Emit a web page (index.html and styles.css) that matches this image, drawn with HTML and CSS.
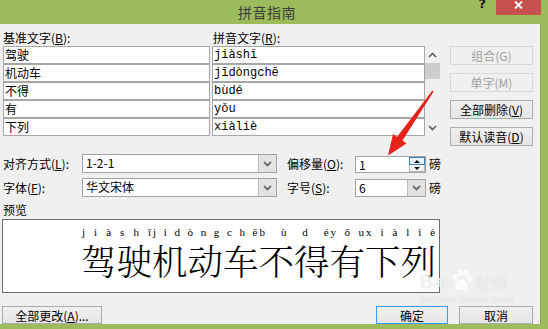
FILE: index.html
```html
<!DOCTYPE html>
<html lang="zh-CN">
<head>
<meta charset="utf-8">
<title>拼音指南</title>
<link rel="stylesheet" href="styles.css">
</head>
<body>
<div class="window">
  <div class="titlebar">
    <div class="title">拼音指南</div>
    <div class="controls">
      <span class="help">?</span>
      <span class="close"><svg width="9" height="8" viewBox="0 0 9 8"><path d="M1 0.5 L8 7.5 M8 0.5 L1 7.5" stroke="#fff" stroke-width="1.8" fill="none"/></svg></span>
    </div>
  </div>
  <div class="panel">
    <div class="top">
      <div class="table">
        <div class="hdr"><span class="h1">基准文字(<u>B</u>):</span><span class="h2">拼音文字(<u>R</u>):</span></div>
        <div class="row"><div class="cell base">驾驶</div><div class="cell py">jiàshǐ</div></div>
        <div class="row"><div class="cell base">机动车</div><div class="cell py">jīdòngchē</div></div>
        <div class="row"><div class="cell base">不得</div><div class="cell py">bùdé</div></div>
        <div class="row"><div class="cell base">有</div><div class="cell py">yǒu</div></div>
        <div class="row"><div class="cell base">下列</div><div class="cell py">xiàliè</div></div>
      </div>
      <div class="scrollbar">
        <div class="sb-btn"><svg width="9" height="6" viewBox="0 0 9 6"><path d="M1 5 L4.5 1.5 L8 5" stroke="#606060" stroke-width="1.7" fill="none"/></svg></div>
        <div class="sb-thumb"></div>
        <div class="sb-track"></div>
        <div class="sb-btn"><svg width="9" height="6" viewBox="0 0 9 6"><path d="M1 1 L4.5 4.5 L8 1" stroke="#606060" stroke-width="1.7" fill="none"/></svg></div>
      </div>
      <div class="side">
        <div class="btn disabled">组合(G)</div>
        <div class="btn disabled">单字(M)</div>
        <div class="btn">全部删除(<u>V</u>)</div>
        <div class="btn">默认读音(<u>D</u>)</div>
      </div>
    </div>

    <div class="opts">
      <div class="opt">
        <span class="lbl">对齐方式(<u>L</u>):</span>
        <div class="select wide"><span class="val">1-2-1</span><span class="drop"><svg width="9" height="6" viewBox="0 0 9 6"><path d="M1 1 L4.5 4.5 L8 1" stroke="#6a6a6a" stroke-width="1.8" fill="none"/></svg></span></div>
        <span class="lbl2">偏移量(<u>O</u>):</span>
        <div class="spin"><span class="val">1</span>
          <span class="arrows"><span class="up"><i class="tri-up"></i></span><span class="down"><i class="tri-down"></i></span></span>
        </div>
        <span class="unit">磅</span>
      </div>
      <div class="opt">
        <span class="lbl">字体(<u>F</u>):</span>
        <div class="select wide"><span class="val">华文宋体</span><span class="drop"><svg width="9" height="6" viewBox="0 0 9 6"><path d="M1 1 L4.5 4.5 L8 1" stroke="#6a6a6a" stroke-width="1.8" fill="none"/></svg></span></div>
        <span class="lbl2">字号(<u>S</u>):</span>
        <div class="select narrow"><span class="val">6</span><span class="drop"><svg width="9" height="6" viewBox="0 0 9 6"><path d="M1 1 L4.5 4.5 L8 1" stroke="#6a6a6a" stroke-width="1.8" fill="none"/></svg></span></div>
        <span class="unit">磅</span>
      </div>
    </div>

    <div class="pv-label">预览</div>
    <div class="preview">
      <div class="ruby"><div class="rt"><span>j</span><span>i</span><span>à</span><span>s</span><span>h</span><span>ǐ</span></div><div class="rb">驾驶</div></div>
      <div class="ruby"><div class="rt"><span>j</span><span>i</span><span>d</span><span>ò</span><span>n</span><span>g</span><span>c</span><span>h</span><span>ē</span></div><div class="rb">机动车</div></div>
      <div class="ruby"><div class="rt"><span>b</span><span>ù</span><span>d</span><span>é</span></div><div class="rb">不得</div></div>
      <div class="ruby"><div class="rt"><span>y</span><span>ǒ</span><span>u</span></div><div class="rb">有</div></div>
      <div class="ruby"><div class="rt"><span>x</span><span>i</span><span>à</span><span>l</span><span>i</span><span>è</span></div><div class="rb">下列</div></div>
    </div>

    <div class="footer">
      <div class="btn b-all">全部更改(<u>A</u>)...</div>
      <div class="spacer"></div>
      <div class="btn b-ok">确定</div>
      <div class="btn b-cancel">取消</div>
    </div>
  </div>

  <div class="watermark">
    <div class="wm-top"><span class="wm-bai">Bai</span><svg class="wm-paw" width="24" height="24" viewBox="0 0 24 24"><ellipse cx="6" cy="9" rx="2.6" ry="3.4"/><ellipse cx="11" cy="4.5" rx="2.6" ry="3.4"/><ellipse cx="16.5" cy="5" rx="2.6" ry="3.4"/><ellipse cx="20.5" cy="10.5" rx="2.4" ry="3"/><path d="M12.5 11 C9 11 6 16 6 19 C6 22 9 22 12.5 21 C16 22 19 22 19 19 C19 16 16 11 12.5 11 Z"/></svg><span class="wm-jy">经验</span></div>
    <div class="wm-url">jingyan.baidu.com</div>
  </div>

  <svg class="arrow" width="548" height="329" viewBox="0 0 548 329"><polygon points="432.4,90.6 433.6,91.4 402.5,140.6 406.5,143.5 388,155.5 393,134 397,137" fill="#e8211b"/></svg>
</div>
</body>
</html>
```

FILE: styles.css
```css
html, body {
  margin: 0;
  padding: 0;
}
body {
  width: 548px;
  height: 329px;
  overflow: hidden;
  font-family: "Noto Sans CJK SC", "Noto Sans", sans-serif;
  font-size: 12px;
  color: #000;
}
u { text-decoration: underline; text-underline-offset: 1px; }

.window {
  position: relative;
  width: 548px;
  height: 329px;
  background: #9cbb5a;
  display: flex;
  flex-direction: column;
}

/* title bar */
.titlebar {
  height: 24px;
  display: grid;
  flex: none;
}
.titlebar > * { grid-area: 1 / 1; }
.title {
  justify-self: center;
  align-self: center;
  padding-right: 14px;
  font-size: 14px;
  letter-spacing: 0.5px;
  line-height: 24px;
  color: #3b3b3b;
}
.controls {
  justify-self: end;
  align-self: start;
  display: flex;
  align-items: flex-start;
  margin-right: 7px;
}
.help {
  font: bold 13px/13px "DejaVu Sans", sans-serif;
  color: #202020;
  margin-top: -3px;
  margin-right: 10px;
}
.close {
  width: 45px;
  height: 20px;
  margin-top: -5px;
  background: #c75050;
  display: flex;
  align-items: center;
  justify-content: center;
}

/* panel */
.panel {
  flex: 1;
  margin: 0 8px 8px 0;
  background: #f0f0f0;
  box-shadow: 1px 0 0 #8caa4d;
  display: flex;
  flex-direction: column;
}

.top {
  display: flex;
  align-items: flex-start;
  padding-left: 3px;
}
.table { width: 422px; }
.hdr {
  height: 22px;
  display: flex;
  align-items: flex-end;
}
.hdr span { line-height: 15px; padding-bottom: 1px; }
.hdr .h1 { width: 210px; }
.row { display: flex; height: 18px; }
.cell {
  box-sizing: border-box;
  height: 18px;
  border: 1px solid #a6a6a6;
  background: #fff;
  line-height: 16px;
  padding-left: 1px;
  white-space: nowrap;
  overflow: hidden;
}
.base { width: 207px; }
.py {
  width: 213px;
  margin-left: 2px;
  font-family: "Liberation Mono", monospace;
  font-size: 12px;
}

.scrollbar {
  width: 15px;
  height: 90px;
  margin-top: 22px;
  display: flex;
  flex-direction: column;
}
.sb-btn {
  height: 17px;
  display: flex;
  align-items: center;
  justify-content: center;
}
.sb-thumb { height: 16px; background: #cdcdcd; }
.sb-track { flex: 1; }

.side {
  width: 83px;
  margin-left: 10px;
  margin-top: 22px;
  display: flex;
  flex-direction: column;
  gap: 8px;
}
.btn {
  box-sizing: border-box;
  height: 19px;
  border: 1px solid #acacac;
  background: linear-gradient(#f0f0f0, #e5e5e5);
  display: flex;
  align-items: center;
  justify-content: center;
  line-height: 15px;
  white-space: nowrap;
}
.btn.disabled {
  border-color: #d9d9d9;
  background: #f0f0f0;
  color: #a2a2a2;
}

/* options */
.opts {
  margin-top: 8px;
  display: flex;
  flex-direction: column;
  gap: 5px;
}
.opt {
  display: flex;
  align-items: center;
  height: 19px;
}
.lbl { width: 79px; padding-left: 3px; }
.lbl2 { width: 68px; margin-left: 10px; }
.unit { margin-left: 3px; }
.select, .spin {
  box-sizing: border-box;
  height: 19px;
  border: 1px solid #a3a3a3;
  background: #fff;
  display: flex;
}
.select.wide { width: 195px; }
.select.narrow { width: 71px; height: 18px; }
.val { flex: 1; padding-left: 3px; line-height: 16px; }
.drop {
  width: 17px;
  background: #e3e3e3;
  border-left: 1px solid #b9b9b9;
  display: flex;
  align-items: center;
  justify-content: center;
}
.spin { width: 71px; height: 17px; align-self: flex-end; }
.spin .val { line-height: 15px; }
.arrows { width: 16px; display: flex; flex-direction: column; }
.arrows .up, .arrows .down {
  box-sizing: border-box;
  flex: 1;
  display: flex;
  align-items: center;
  justify-content: center;
}
.arrows .up { border: 1px solid #3c7fb1; background: #eaf3fb; }
.arrows .down { border: 1px solid #b5b5b5; border-top: none; background: #f4f4f4; }
.tri-up, .tri-down {
  width: 0; height: 0;
  border-left: 3px solid transparent;
  border-right: 3px solid transparent;
}
.tri-up { border-bottom: 3px solid #111; }
.tri-down { border-top: 3px solid #111; }

/* preview */
.pv-label {
  margin-top: 6px;
  padding-left: 3px;
  line-height: 14px;
}
.preview {
  box-sizing: border-box;
  width: 438px;
  height: 74px;
  margin-top: 2px;
  margin-left: 2px;
  border: 1px solid #6d6d6d;
  background: #fff;
  display: flex;
  align-items: flex-start;
  padding-left: 78px;
  padding-top: 6px;
  overflow: hidden;
}
.ruby { display: flex; flex-direction: column; }
.rt {
  display: flex;
  justify-content: space-between;
  font: 11px/13px "Liberation Serif", serif;
  padding: 0 1px;
}
.rb {
  margin-top: 3px;
  font-family: "Noto Serif CJK SC", "Noto Sans CJK SC", serif;
  font-weight: 300;
  font-size: 35.5px;
  line-height: 36px;
  white-space: nowrap;
}

/* footer */
.footer {
  display: flex;
  margin-top: 13px;
  padding-left: 2px;
  padding-right: 7px;
}
.footer .btn { height: 18px; }
.b-all { width: 100px; }
.spacer { flex: 1; }
.b-ok { width: 72px; border-color: #3399ff; }
.b-cancel { width: 74px; margin-left: 11px; }

/* overlays */
.watermark {
  position: absolute;
  left: 420px;
  top: 268px;
  color: rgba(255, 255, 255, 0.75);
  text-shadow: 0 0 1px rgba(0, 0, 0, 0.2);
  pointer-events: none;
}
.wm-top { display: flex; align-items: flex-end; }
.wm-bai { font: bold 18px/18px "Liberation Sans", sans-serif; }
.wm-paw { fill: rgba(255, 255, 255, 0.7); margin: 0 3px -1px 1px; }
.wm-jy { font-size: 16px; line-height: 18px; }
.wm-url { font: 11px/13px "Liberation Sans", sans-serif; margin-top: 2px; letter-spacing: 0.3px; }

.arrow {
  position: absolute;
  left: 0;
  top: 0;
  pointer-events: none;
}
```
